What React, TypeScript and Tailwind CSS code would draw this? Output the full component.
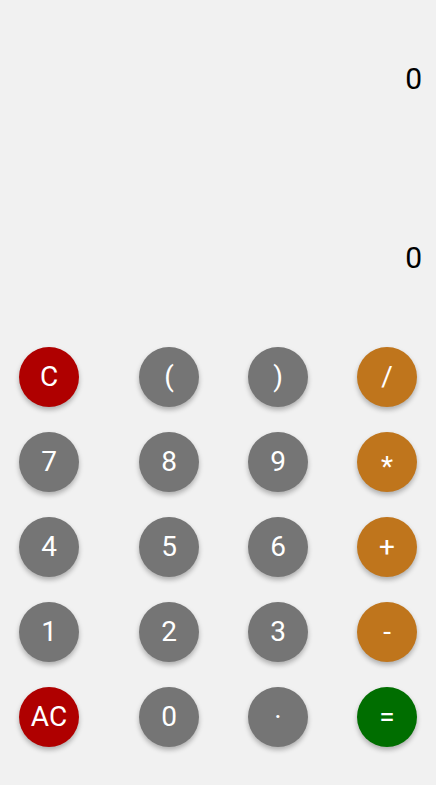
import React from 'react';

type Key = { label: string; kind: 'num' | 'op' | 'clear' | 'eq' };

const rows: Key[][] = [
  [{ label: 'C', kind: 'clear' }, { label: '(', kind: 'num' }, { label: ')', kind: 'num' }, { label: '/', kind: 'op' }],
  [{ label: '7', kind: 'num' }, { label: '8', kind: 'num' }, { label: '9', kind: 'num' }, { label: '*', kind: 'op' }],
  [{ label: '4', kind: 'num' }, { label: '5', kind: 'num' }, { label: '6', kind: 'num' }, { label: '+', kind: 'op' }],
  [{ label: '1', kind: 'num' }, { label: '2', kind: 'num' }, { label: '3', kind: 'num' }, { label: '-', kind: 'op' }],
  [{ label: 'AC', kind: 'clear' }, { label: '0', kind: 'num' }, { label: '·', kind: 'num' }, { label: '=', kind: 'eq' }],
];

const colors: Record<Key['kind'], string> = {
  num: 'bg-[#757575]',
  op: 'bg-[#bf751c]',
  clear: 'bg-[#af0000]',
  eq: 'bg-[#006e00]',
};

export default function App() {
  return (
    <div
      className="w-[436px] h-[785px] bg-[#f1f1f1] flex flex-col"
      style={{ fontFamily: 'Roboto, "Noto Sans", sans-serif' }}
    >
      {/* Display */}
      <div className="flex flex-col items-end pr-[14px] pt-[61px] text-black text-[30px] leading-[36px]">
        <div>0</div>
        <div className="mt-[143px]">0</div>
      </div>

      {/* Keypad */}
      <div className="flex flex-col gap-[25px] pt-[71px] pl-[19px]">
        {rows.map((row, i) => (
          <div key={i} className="grid grid-cols-[120px_109px_109px_60px]">
            {row.map((k) => (
              <button
                key={k.label}
                className={`w-[60px] h-[60px] rounded-full flex items-center justify-center text-white text-[28px] shadow-[0_3px_5px_rgba(0,0,0,0.28)] ${colors[k.kind]}`}
              >
                <span className={k.label === '*' ? 'translate-y-[5px]' : ''}>{k.label}</span>
              </button>
            ))}
          </div>
        ))}
      </div>
    </div>
  );
}
